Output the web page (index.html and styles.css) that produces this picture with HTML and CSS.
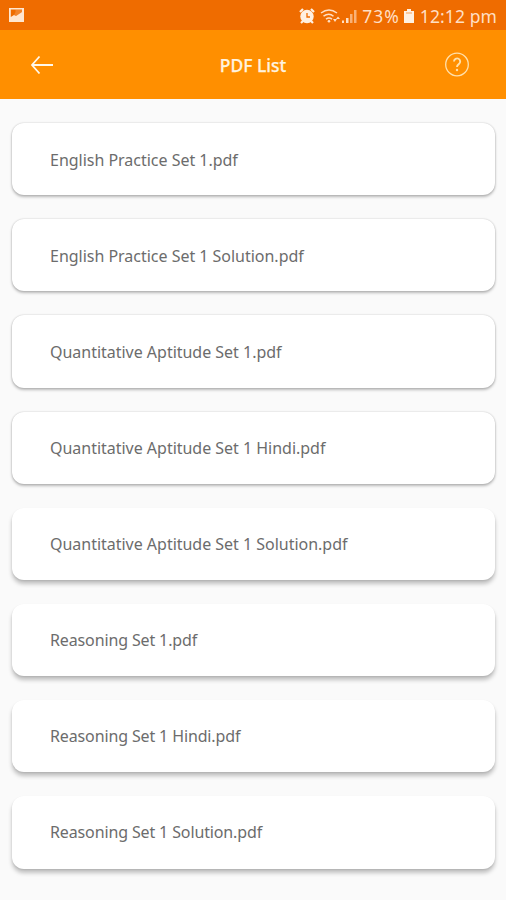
FILE: index.html
```html
<!DOCTYPE html>
<html lang="en">
<head>
<meta charset="utf-8">
<title>PDF List</title>
<link rel="stylesheet" href="styles.css">
</head>
<body>
<div class="status">
  <svg class="picture" width="16" height="16" viewBox="0 0 16 16"><path fill-rule="evenodd" d="M1 1h15v14H1zM2.800 2.500v7.500L6 8l2 1 6-4V2.500z" fill="currentColor"/><path d="M7.500 2.500H14V5L8 9 6 8l1.500-3z" fill="currentColor" opacity=".2"/></svg>
  <div class="indicators">
    <svg class="alarm" width="16" height="16" viewBox="0 0 16 16"><circle cx="8" cy="8.500" r="6.700" fill="currentColor"/><path d="M1 4l3-3M15 4l-3-3M4 13l-2 2M12 13l2 2" stroke="currentColor" stroke-width="2.200"/><path d="M8 5v4h3" fill="none" stroke="#ef6c00" stroke-width="1.300"/></svg>
    <svg class="wifi" width="21" height="16" viewBox="0 0 21 16"><path d="M1 5q8-6 16 0M3.500 8.200q5.500-4 10 0M6 11.200q3-2.500 6 0" fill="none" stroke="currentColor" stroke-width="1.500"/><circle cx="9" cy="13.300" r="1.300" fill="currentColor"/><path d="M13 11h4l-2 3zM16 11h4l-2-2.500z" fill="currentColor"/></svg>
    <svg class="signal" width="16" height="16" viewBox="0 0 16 16"><path d="M0 12.500h2V15H0zM4 10h2.500v5H4z" fill="currentColor"/><path d="M8 6h2.500v9H8zM12 2h2.500v13H12z" fill="currentColor" opacity=".6"/></svg>
    <span class="percent">73%</span>
    <svg class="battery" width="10" height="16" viewBox="0 0 10 16"><path d="M3 1h4v2h3v12H0V3h3z" fill="currentColor"/><path d="M2 5h6" stroke="#ef6c00" stroke-width="1" opacity=".6"/></svg>
    <span class="time">12:12 pm</span>
  </div>
</div>
<header class="bar">
  <svg class="back" width="24" height="20" viewBox="0 0 24 20"><path d="M23 10H2M9.500 1.500L2 10l7.500 8.500" fill="none" stroke="currentColor" stroke-width="1.800"/></svg>
  <h1 class="title">PDF List</h1>
  <svg class="help" width="26" height="26" viewBox="0 0 26 26"><circle cx="13" cy="12.500" r="11.300" fill="none" stroke="currentColor" stroke-width="1.300"/><path d="M10 9.500a3.100 3.100 0 1 1 4.800 2.600q-1.800 1.200-1.800 2.900" fill="none" stroke="currentColor" stroke-width="1.900"/><circle cx="13" cy="18" r="1.200" fill="currentColor"/></svg>
</header>
<main class="list">
  <div class="card"><span>English Practice Set 1.pdf</span></div>
  <div class="card"><span>English Practice Set 1 Solution.pdf</span></div>
  <div class="card"><span>Quantitative Aptitude Set 1.pdf</span></div>
  <div class="card"><span>Quantitative Aptitude Set 1 Hindi.pdf</span></div>
  <div class="card deep"><span>Quantitative Aptitude Set 1 Solution.pdf</span></div>
  <div class="card deep tight"><span>Reasoning Set 1.pdf</span></div>
  <div class="card deep tight"><span>Reasoning Set 1 Hindi.pdf</span></div>
  <div class="card deep tight"><span>Reasoning Set 1 Solution.pdf</span></div>
</main>
</body>
</html>
```

FILE: styles.css
```css
* { box-sizing: border-box; }
body { margin: 0; height: 900px; overflow: hidden; background: #fafafa; font-family: "Noto Sans", sans-serif; }
svg { display: block; flex: none; }
.status { height: 30px; background: #ef6c00; color: #ffdfc4; display: flex; justify-content: space-between; align-items: center; padding: 2px 9px 0 8px; }
.picture { margin-top: -2px; color: #ffe6d0; }
.indicators { display: flex; align-items: center; font-size: 17.500px; line-height: 28px; white-space: nowrap; }
.alarm { color: #fff0e2; }
.wifi { margin-left: 5px; }
.signal { margin-left: 1px; }
.percent { margin-left: 4px; letter-spacing: 1px; }
.battery { margin: 0 6px 0 4px; color: #fff0e2; }
.time { letter-spacing: .1px; }
.bar { height: 69px; background: #ff8f00; color: #fff3df; display: grid; grid-template-columns: 80px 1fr 80px; align-items: center; }
.back { margin-left: 30px; color: #fff8ea; }
.title { margin: 0; text-align: center; font-size: 17.500px; font-weight: 500; -webkit-text-stroke: .25px currentColor; }
.help { margin-left: 18px; color: #ffe0ab; }
.list { display: flex; flex-direction: column; gap: 24px; padding: 24px 11px 0 12px; }
.card { height: 72.200px; border-radius: 12px; background: #fff; box-shadow: 0 2px 3px rgba(0,0,0,.26), 0 0 2px rgba(0,0,0,.2); display: flex; align-items: center; padding: 1px 38px 0; color: #6c6c6c; font-size: 16px; letter-spacing: -.02px; white-space: nowrap; }
.deep { box-shadow: 0 4px 4px rgba(0,0,0,.23), 0 1px 2px rgba(0,0,0,.09); }
.tight { padding-top: 0; letter-spacing: -.13px; }
```
